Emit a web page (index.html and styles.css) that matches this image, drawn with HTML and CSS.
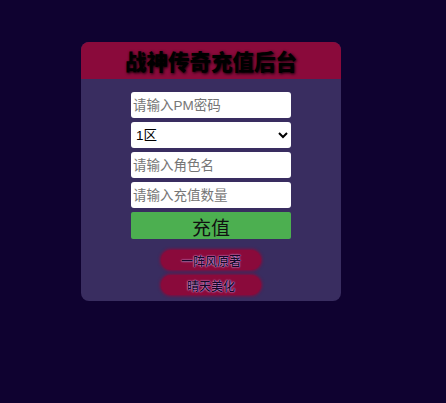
FILE: index.html
```html
<!DOCTYPE html>
<html lang="zh">
<head>
<meta charset="utf-8">
<title>战神传奇充值后台</title>
<link rel="stylesheet" href="styles.css">
</head>
<body>
<div class="card">
  <div class="card-head"><h1 class="title">战神传奇充值后台</h1></div>
  <form class="form">
    <input class="field" type="password" placeholder="请输入PM密码">
    <select class="field select">
      <option>1区</option>
      <option>2区</option>
    </select>
    <input class="field" type="text" placeholder="请输入角色名">
    <input class="field" type="text" placeholder="请输入充值数量">
    <button class="submit" type="button">充值</button>
    <div class="credits">
      <span class="pill">一阵风原著</span>
      <span class="pill">晴天美化</span>
    </div>
  </form>
</div>
</body>
</html>
```

FILE: styles.css
```css
html, body {
  margin: 0;
  padding: 0;
  background: #0f0230;
  font-family: "Liberation Sans", "Noto Sans CJK SC", sans-serif;
}
body {
  width: 446px;
  height: 403px;
  padding-top: 42px;
  box-sizing: border-box;
}
.card {
  width: 260px;
  height: 259px;
  margin-left: 81px;
  background: #392d60;
  border-radius: 8px;
  overflow: hidden;
  box-sizing: border-box;
  display: flex;
  flex-direction: column;
}
.card-head {
  height: 37px;
  background: #8a0a3b;
  display: flex;
  align-items: center;
  justify-content: center;
}
.title {
  margin: 0;
  font-family: "Noto Sans CJK SC", sans-serif;
  font-size: 21.5px;
  font-weight: 900;
  color: #000;
  text-shadow: 1px 1px 3px #000;
  line-height: 1;
  padding-top: 1px;
}
.form {
  display: flex;
  flex-direction: column;
  align-items: center;
  gap: 4px;
  padding-top: 13px;
}
.field {
  width: 160px;
  height: 26px;
  box-sizing: border-box;
  border: none;
  border-radius: 3px;
  background: #fff;
  padding: 1px 2px;
  font-family: "Liberation Sans", "Noto Sans CJK SC", sans-serif;
  font-size: 13.5px;
  color: #000;
  outline: none;
  margin: 0;
}
.field::placeholder {
  color: #767676;
}
.select {
  padding-left: 1px;
}
.submit {
  width: 160px;
  height: 27px;
  border: none;
  border-radius: 2px;
  background: #4caf50;
  color: #111;
  font-family: "Noto Sans CJK SC", sans-serif;
  font-size: 19px;
  line-height: 1;
  padding: 2px 0 0;
  margin: 0;
}
.credits {
  display: flex;
  flex-direction: column;
  align-items: center;
  gap: 5px;
  margin-top: 7px;
}
.pill {
  width: 100px;
  height: 20px;
  border-radius: 10px;
  background: #8a0a3b;
  box-shadow: 0 0 3px 1px #8a0a3b;
  display: flex;
  align-items: center;
  justify-content: center;
  font-family: "Noto Sans CJK SC", sans-serif;
  font-size: 12px;
  font-weight: 500;
  color: #160628;
  text-shadow: 0 0 1px #e6c8ff, 0 0 2px #c99cf0;
}
```
